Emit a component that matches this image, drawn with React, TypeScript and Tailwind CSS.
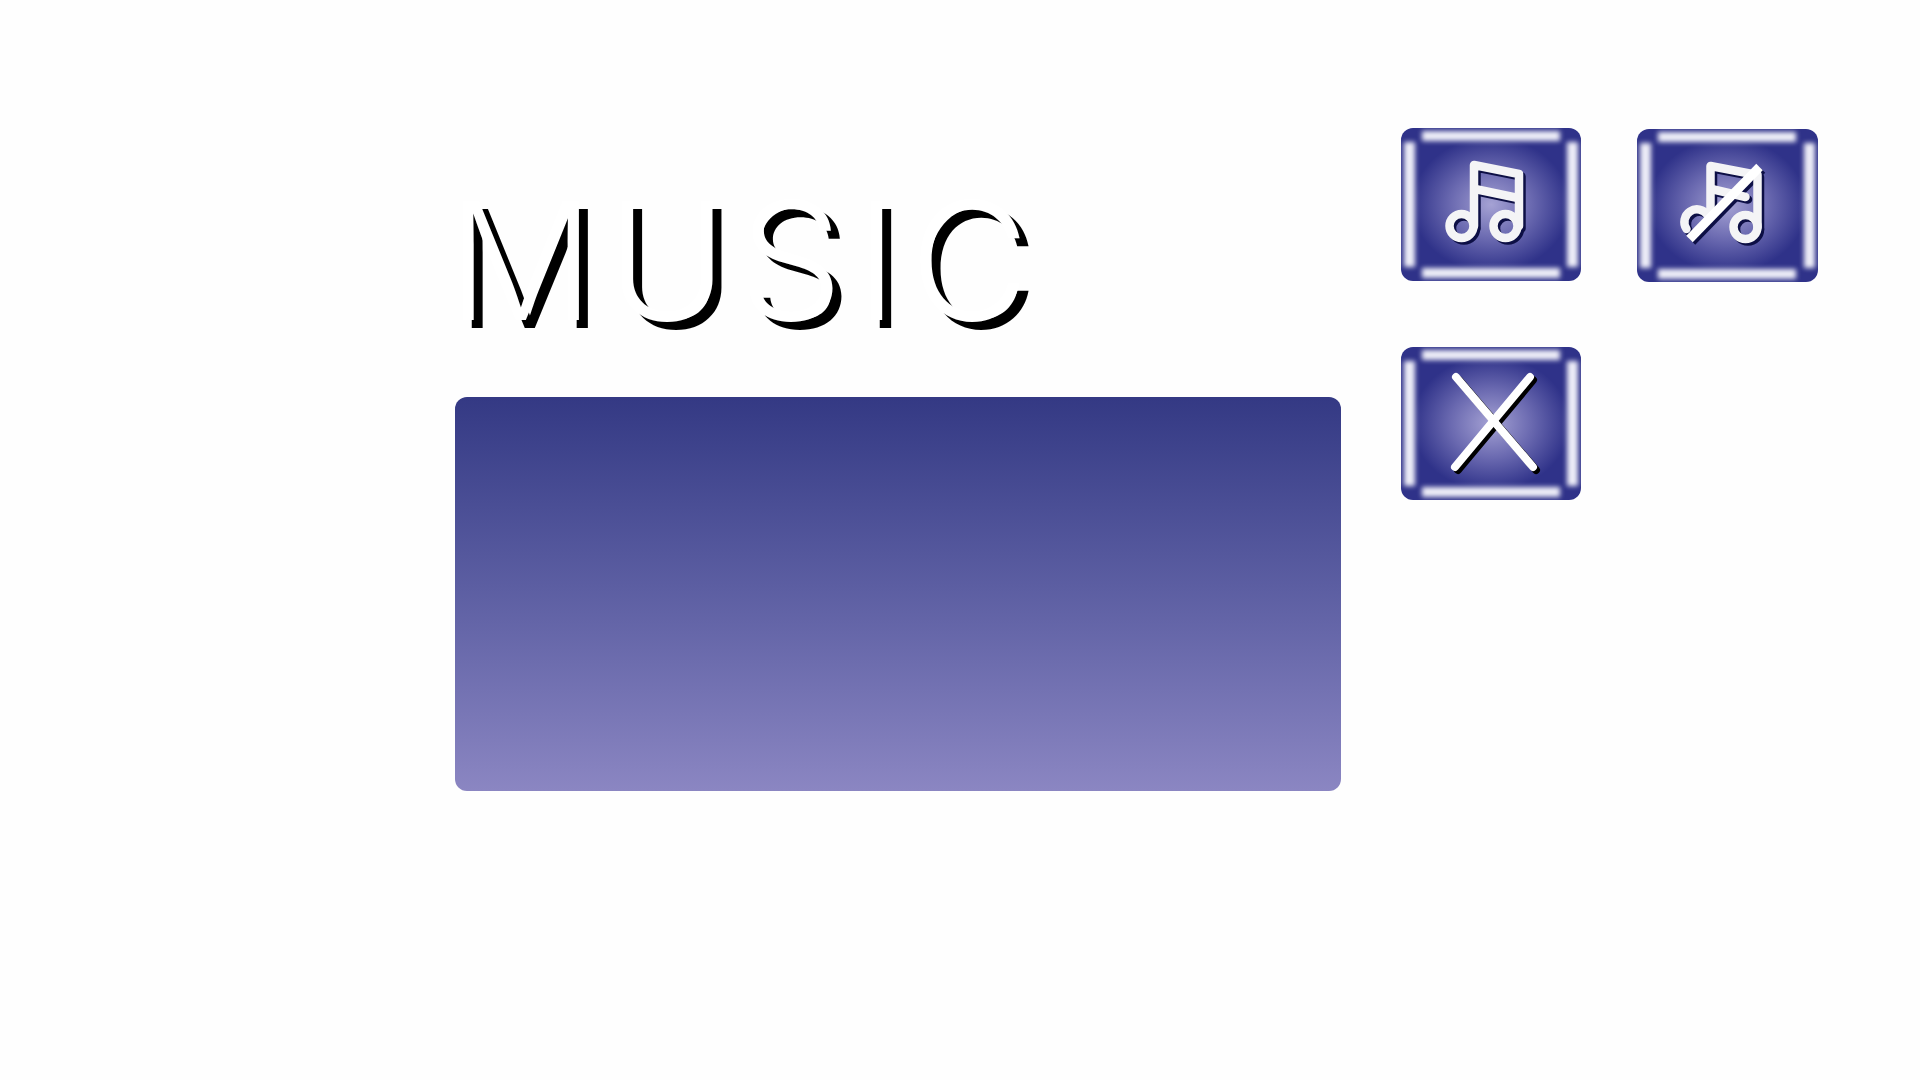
function Bars() {
  return (
    <>
      <div className="absolute left-[21px] top-[3px] h-[10px] w-[138px] bg-[#eeeef8] blur-[2.5px]" />
      <div className="absolute bottom-[3px] left-[21px] h-[10px] w-[138px] bg-[#eeeef8] blur-[2.5px]" />
      <div className="absolute left-[3px] top-[14px] h-[125px] w-[11px] bg-[#eeeef8] blur-[2.5px]" />
      <div className="absolute right-[3px] top-[14px] h-[125px] w-[11px] bg-[#eeeef8] blur-[2.5px]" />
    </>
  );
}

function IconButton({ className = "", children }: { className?: string; children: React.ReactNode }) {
  return (
    <button className={`relative h-[153px] w-[180px] overflow-hidden rounded-[12px] bg-[radial-gradient(ellipse_at_center,#a5a2d4_0%,#6a69b0_32%,#2f3289_62%)] ${className}`}>
      <Bars />
      <svg viewBox="0 0 180 153" className="absolute inset-0 h-full w-full" fill="none" strokeLinecap="round" strokeLinejoin="round">
        {children}
      </svg>
    </button>
  );
}

function Note({ color }: { color: string }) {
  return (
    <g stroke={color} strokeWidth="8.5">
      <circle cx="60.5" cy="98" r="12" />
      <circle cx="104.5" cy="98" r="12" />
      <path d="M73 98V37L118 46V98" />
      <path d="M74 61L117 70" />
    </g>
  );
}

function MutedNote({ color }: { color: string }) {
  return (
    <g stroke={color} strokeWidth="8.5">
      <path d="M49 100A12 12 0 0 1 70 86" />
      <circle cx="108" cy="98" r="12" />
      <path d="M73 82V37L120 46V98" />
      <path d="M74 60L108 68" />
    </g>
  );
}

export default function App() {
  return (
    <div className="flex h-screen w-full gap-[60px] overflow-hidden bg-[#fefefe] pl-[455px] font-['Inter',sans-serif]">
      <main className="flex w-[886px] flex-col pt-[186px]">
        <h1 className="-ml-2 h-[211px] text-[164px] font-light leading-[150px] tracking-[12px] text-white [text-shadow:9px_8px_0_#000]">MUSIC</h1>
        <div className="h-[394px] rounded-xl bg-gradient-to-b from-[#343984] to-[#8b86c2]" />
      </main>
      <aside className="grid h-fit grid-cols-[180px_181px] gap-x-[56px] gap-y-[65px] pt-[128px]">
        <IconButton>
          <g transform="translate(2.5 2.5)"><Note color="#0d0f45" /></g>
          <Note color="#f4f4f6" />
        </IconButton>
        <IconButton className="mt-px w-[181px]">
          <g transform="translate(2.5 2.5)">
            <MutedNote color="#0d0f45" />
            <path d="M52 110L122 38" stroke="#0d0f45" strokeWidth="9" strokeLinecap="butt" />
          </g>
          <MutedNote color="#f4f4f6" />
          <path d="M52 110L122 38" stroke="#ffffff" strokeWidth="9" strokeLinecap="butt" />
        </IconButton>
        <IconButton>
          <g stroke="#000" strokeWidth="8" transform="translate(3 3)">
            <path d="M55 30L132 120" />
            <path d="M129 30L54 120" />
          </g>
          <g stroke="#fff" strokeWidth="8">
            <path d="M55 30L132 120" />
            <path d="M129 30L54 120" />
          </g>
        </IconButton>
      </aside>
    </div>
  );
}
